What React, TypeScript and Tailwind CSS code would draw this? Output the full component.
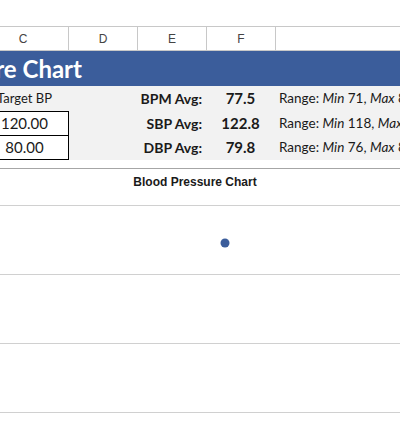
import React from 'react';

const columns = ['D', 'E', 'F'];

const stats = [
  { label: 'BPM Avg:', value: '77.5', min: '71', max: '84' },
  { label: 'SBP Avg:', value: '122.8', min: '118', max: '128' },
  { label: 'DBP Avg:', value: '79.8', min: '76', max: '84' },
];

const App = () => {
  return (
    <div className="w-[400px] h-[440px] overflow-hidden bg-white font-['Lato',sans-serif] text-[#1a1a1a]">
      {/* Top toolbar gap */}
      <div className="h-[26px]" />

      {/* Column headers */}
      <div className="flex h-[25px] border-y border-[#c8c8c8] font-['Liberation_Sans',sans-serif] text-[12px] text-[#444]">
        <div className="w-[69px] shrink-0 border-r border-[#c8c8c8] flex items-center justify-center pr-[22px]">C</div>
        {columns.map((c) => (
          <div key={c} className="w-[69px] shrink-0 border-r border-[#c8c8c8] flex items-center justify-center">
            {c}
          </div>
        ))}
        <div className="flex-1" />
      </div>

      {/* Title band */}
      <div className="h-[35px] bg-[#3b5d9b] flex items-center">
        <div className="w-[82px] shrink-0 flex justify-end whitespace-nowrap text-white font-bold text-[24px] leading-none">
          Blood Pressure Chart
        </div>
      </div>

      {/* Summary block */}
      <div className="h-[74px] bg-[#f2f2f2] flex whitespace-nowrap">
        <div className="w-[68px] shrink-0 flex flex-col">
          <div className="-ml-[20px] w-[89px] h-[25px] flex items-center justify-center text-[13px]">Target BP</div>
          <div className="-ml-[20px] w-[89px] border border-black bg-white text-[15px]">
            <div className="h-[24px] border-b border-black flex items-center justify-center">120.00</div>
            <div className="h-[23px] flex items-center justify-center">80.00</div>
          </div>
        </div>
        <div className="w-[138px] shrink-0 flex flex-col">
          {stats.map((s, i) => (
            <div key={s.label} className={`${i === 0 ? 'h-[25px]' : 'h-[24px]'} flex items-center justify-end pr-[4px] font-bold text-[14px]`}>
              {s.label}
            </div>
          ))}
        </div>
        <div className="w-[69px] shrink-0 flex flex-col">
          {stats.map((s, i) => (
            <div key={s.value} className={`${i === 0 ? 'h-[25px]' : 'h-[24px]'} flex items-center justify-center font-bold text-[15px]`}>
              {s.value}
            </div>
          ))}
        </div>
        <div className="flex-1 flex flex-col pl-[4px] text-[13.5px]">
          {stats.map((s, i) => (
            <div key={s.label} className={`${i === 0 ? 'h-[25px]' : 'h-[24px]'} flex items-center`}>
              Range:&nbsp;<span className="italic">Min</span>&nbsp;{s.min},&nbsp;<span className="italic">Max</span>&nbsp;{s.max}
            </div>
          ))}
        </div>
      </div>

      <div className="h-[8px]" />

      {/* Chart */}
      <div className="border-t border-[#a6a6a6]">
        <div className="h-[36px] flex items-start justify-center pt-[4px] pr-[10px] font-['Liberation_Sans',sans-serif] font-bold text-[12px]">
          Blood Pressure Chart
        </div>
        <svg width="400" height="235" viewBox="0 0 400 235" className="block">
          {[0, 69, 138, 207].map((y) => (
            <line key={y} x1="0" x2="400" y1={y + 0.5} y2={y + 0.5} stroke="#d0d0d0" strokeWidth="1" />
          ))}
          <circle cx="225" cy="38" r="4.5" fill="#3b5d9b" />
        </svg>
      </div>
    </div>
  );
};

export default App;
